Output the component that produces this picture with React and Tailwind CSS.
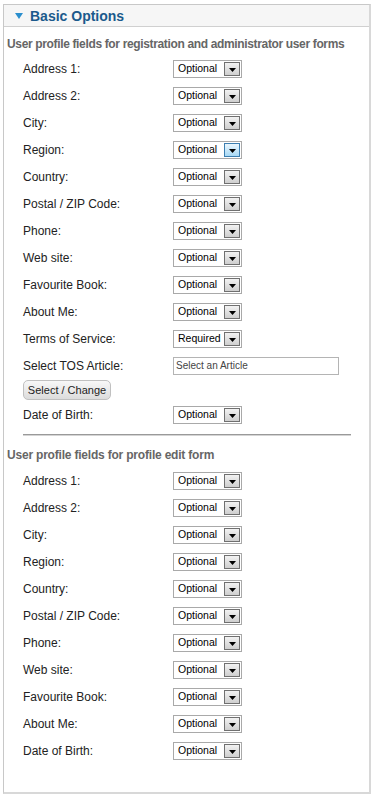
import React from "react";

const font = { fontFamily: '"Liberation Sans", Arial, sans-serif' };

function Select({ value = "Optional", hover = false }) {
  return (
    <div className="flex h-[18px] w-[69px] items-center border border-[#a9a9a9] bg-white">
      <span className="flex-1 pl-[4px] text-[10.5px] leading-none text-black">{value}</span>
      <div
        className={
          "mr-[1px] flex h-[14px] w-[16px] items-center justify-center border " +
          (hover
            ? "border-[#3c7fb1] bg-gradient-to-b from-[#eaf6fd] to-[#a7d9f5]"
            : "border-[#707070] bg-gradient-to-b from-[#f2f2f2] to-[#cfcfcf]")
        }
      >
        <svg width="7" height="4" viewBox="0 0 7 4" className="mt-[3px]">
          <path d="M0 0 H7 L3.5 4 Z" fill="#000" />
        </svg>
      </div>
    </div>
  );
}

function Row({ label, children }) {
  return (
    <div className="flex h-[27px] items-center pl-[16px]">
      <div className="w-[150px] text-[12px] text-[#222]">{label}</div>
      {children}
    </div>
  );
}

const first = [
  "Address 1:",
  "Address 2:",
  "City:",
  "Region:",
  "Country:",
  "Postal / ZIP Code:",
  "Phone:",
  "Web site:",
  "Favourite Book:",
  "About Me:",
];

const second = [
  "Address 1:",
  "Address 2:",
  "City:",
  "Region:",
  "Country:",
  "Postal / ZIP Code:",
  "Phone:",
  "Web site:",
  "Favourite Book:",
  "About Me:",
  "Date of Birth:",
];

export default function App() {
  return (
    <div className="h-[796px] w-[372px] bg-white pl-[3px] pr-[1px] pt-[4px] pb-[2px]" style={font}>
      <div className="flex h-full flex-col border border-[#c8c8c8] border-r-2 border-b-2 border-r-[#d8d8d8] border-b-[#d8d8d8] bg-white">
        <div className="flex h-[22px] items-center border-b border-[#d0d0d0] bg-[#f6f6f6] pl-[11px]">
          <svg width="8" height="6" viewBox="0 0 8 6">
            <path d="M0 0 H8 L4 6 Z" fill="#2b8fce" />
          </svg>
          <span className="ml-[7px] text-[14px] font-bold leading-none text-[#1b5a8c]">Basic Options</span>
        </div>
        <div className="px-[3px]">
          <div className="mt-[9px] whitespace-nowrap text-[12px] font-bold leading-[16px] tracking-[-0.35px] text-[#666]">
            User profile fields for registration and administrator user forms
          </div>
          <div className="mt-[3px]">
            {first.map((l) => (
              <Row key={l} label={l}>
                <Select hover={l === "Region:"} />
              </Row>
            ))}
            <Row label="Terms of Service:">
              <Select value="Required" />
            </Row>
            <Row label="Select TOS Article:">
              <div className="flex h-[18px] w-[166px] items-center border border-[#b4b4b4] bg-white pl-[2px] text-[10px] text-[#444]">
                Select an Article
              </div>
            </Row>
            <div className="flex pl-[16px] pt-[1px]">
              <button className="h-[20px] w-[88px] rounded-[5px] border border-[#c0c0c0] bg-gradient-to-b from-[#f8f8f8] to-[#dcdcdc] text-[11px] leading-none text-[#222]">
                Select / Change
              </button>
            </div>
            <div className="mt-[1px]">
              <Row label="Date of Birth:">
                <Select />
              </Row>
            </div>
          </div>
          <div className="ml-[16px] mr-[15px] mt-[6px] border-t border-b border-t-[#9a9a9a] border-b-[#d4d4d4]" />
          <div className="mt-[11px] text-[12px] font-bold leading-[16px] tracking-[-0.2px] text-[#666]">
            User profile fields for profile edit form
          </div>
          <div className="mt-[4px]">
            {second.map((l) => (
              <Row key={l + "2"} label={l}>
                <Select />
              </Row>
            ))}
          </div>
        </div>
      </div>
    </div>
  );
}
